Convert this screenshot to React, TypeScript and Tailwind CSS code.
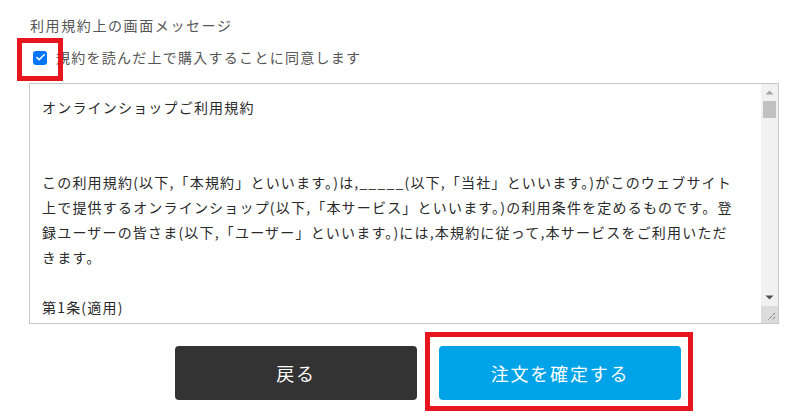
import { Check } from 'lucide-react';

const font = '[font-family:"Noto_Sans_CJK_JP","Noto_Sans",sans-serif]';

const terms = [
  'オンラインショップご利用規約',
  '',
  '',
  'この利用規約(以下,「本規約」といいます。)は,_____(以下,「当社」といいます。)がこのウェブサイト',
  '上で提供するオンラインショップ(以下,「本サービス」といいます。)の利用条件を定めるものです。登',
  '録ユーザーの皆さま(以下,「ユーザー」といいます。)には,本規約に従って,本サービスをご利用いただ',
  'きます。',
  '',
  '第1条(適用)',
];

function FakeScrollbar() {
  return (
    <div className="w-[17px] shrink-0 bg-[#f1f1f1] flex flex-col">
      <div className="h-[17px] flex items-center justify-center">
        <svg width="9" height="5" viewBox="0 0 9 5">
          <path d="M0.5 4.5 L4.5 0.5 L8.5 4.5 Z" fill="#a3a3a3" />
        </svg>
      </div>
      <div className="mx-[2px] h-[17px] bg-[#c1c1c1]" />
      <div className="flex-1" />
      <div className="h-[17px] flex items-center justify-center">
        <svg width="9" height="5" viewBox="0 0 9 5">
          <path d="M0.5 0.5 L4.5 4.5 L8.5 0.5 Z" fill="#505050" />
        </svg>
      </div>
      <div className="h-[17px] bg-[#dcdcdc] relative">
        <svg className="absolute right-[2px] bottom-[2px]" width="10" height="10" viewBox="0 0 10 10">
          <path d="M9 2 L2 9 M9 6 L6 9" stroke="#444" strokeWidth="1" strokeDasharray="1 1" />
        </svg>
      </div>
    </div>
  );
}

export default function App() {
  return (
    <div className={`relative w-[799px] h-[417px] bg-white overflow-hidden ${font} tracking-[0.1em]`}>
      <div className="pl-[30px] pt-[13px]">
        <p className="text-[14px] leading-[24px] text-[#555]">利用規約上の画面メッセージ</p>

        <label className="mt-[8px] flex items-center h-[25px] pl-[3px]">
          <span className="w-[14px] h-[14px] rounded-[3px] bg-[#0075ff] flex items-center justify-center">
            <Check size={11} strokeWidth={3.5} color="#fff" />
          </span>
          <span className="ml-[9px] text-[14px] text-[#555] tracking-[0.09em]">規約を読んだ上で購入することに同意します</span>
        </label>
      </div>

      <div className="ml-[29px] mt-[13px] w-[750px] h-[241px] border border-[#c8c8c8] flex">
        <div className="flex-1 overflow-hidden pl-[12px] pt-[11px] text-[14px] leading-[25px] text-[#2a2a2a] whitespace-nowrap tracking-[0.085em]">
          {terms.map((line, i) => (
            <div key={i} className="h-[25px]">{line}</div>
          ))}
        </div>
        <FakeScrollbar />
      </div>

      <div className="mt-[22px] ml-[175px] flex gap-[22px]">
        <button className="w-[242px] h-[54px] rounded-[4px] bg-[#333] text-white text-[18px] tracking-[0.1em]">
          戻る
        </button>
        <button className="w-[242px] h-[54px] rounded-[4px] bg-[#00a3e7] text-white text-[18px] tracking-[0.1em]">
          注文を確定する
        </button>
      </div>

      {/* annotation boxes */}
      <div className="absolute left-[17px] top-[38px] w-[46px] h-[43px] border-[5px] border-[#e8141e]" />
      <div className="absolute left-[425px] top-[332px] w-[268px] h-[79px] border-[5px] border-[#e8141e]" />
    </div>
  );
}
